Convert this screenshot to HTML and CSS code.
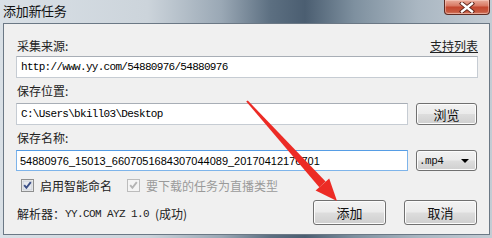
FILE: index.html
```html
<!DOCTYPE html>
<html lang="zh-CN">
<head>
<meta charset="utf-8">
<title>添加新任务</title>
<link rel="stylesheet" href="styles.css">
</head>
<body>
<div class="window">
  <div class="titlebar">
    <span class="title">添加新任务</span>
    <button class="close" aria-label="关闭">
      <svg width="16" height="11" viewBox="0 0 16 11">
        <path d="M3 1.5 L13 9.5 M13 1.5 L3 9.5" stroke="#5a2218" stroke-width="4.2" stroke-linecap="square"/>
        <path d="M3 1.5 L13 9.5 M13 1.5 L3 9.5" stroke="#ffffff" stroke-width="2.4" stroke-linecap="square"/>
      </svg>
    </button>
  </div>
  <div class="panel">
    <div class="label-row first">
      <span class="label">采集来源:</span>
      <span class="link">支持列表</span>
    </div>
    <div class="field mono">http://www.yy.com/54880976/54880976</div>
    <div class="label-row">
      <span class="label">保存位置:</span>
    </div>
    <div class="input-row">
      <div class="field short mono">C:\Users\bkill03\Desktop</div>
      <button class="btn side">浏览</button>
    </div>
    <div class="label-row">
      <span class="label">保存名称:</span>
    </div>
    <div class="input-row">
      <div class="field short focused sans">54880976_15013_6607051684307044089_20170412176701</div>
      <div class="combo"><span class="combo-text">.mp4</span><span class="caret"></span></div>
    </div>
    <div class="check-row">
      <label class="check">
        <svg class="box" width="13" height="13" viewBox="0 0 13 13">
          <rect x="0.5" y="0.5" width="12" height="12" fill="#f4f4f4" stroke="#8e8f8f"/>
          <rect x="2" y="2" width="9" height="9" fill="#e6e9ee" stroke="#b9c0c8" stroke-width="0.6"/>
          <path d="M3.2 6.2 L5.4 8.8 L9.8 3.2" fill="none" stroke="#3b4f87" stroke-width="1.9"/>
        </svg>
        <span>启用智能命名</span>
      </label>
      <label class="check disabled">
        <svg class="box" width="13" height="13" viewBox="0 0 13 13">
          <rect x="0.5" y="0.5" width="12" height="12" fill="#f4f4f4" stroke="#bcbcbc"/>
          <path d="M3.2 6.2 L5.4 8.8 L9.8 3.2" fill="none" stroke="#b4b4b4" stroke-width="1.9"/>
        </svg>
        <span>要下载的任务为直播类型</span>
      </label>
    </div>
    <div class="bottom-row">
      <span class="parser"><span class="cjk">解析器：</span><span class="mono">YY.COM AYZ 1.0 </span><span class="cjk">(成功)</span></span>
      <div class="actions">
        <button class="btn main">添加</button>
        <button class="btn main">取消</button>
      </div>
    </div>
  </div>
  <svg class="arrow" width="492" height="238" viewBox="0 0 492 238">
    <polygon points="246.2,101.6 247.8,100.4 325.6,181.5 319.3,187.3" fill="#ec2b25"/>
    <polygon points="337,201 315.6,190.6 329.2,178.4" fill="#ec2b25"/>
  </svg>
</div>
</body>
</html>
```
FILE: styles.css
```css
* { box-sizing: border-box; }
html, body { margin: 0; padding: 0; }
body {
  width: 492px;
  height: 238px;
  overflow: hidden;
  background: #f0f0f0;
  font-family: "Noto Sans CJK SC", "Liberation Sans", sans-serif;
}
.window {
  position: relative;
  width: 492px;
  height: 238px;
  background: linear-gradient(90deg, #d9e0e6 0%, #ccd4db 30%, #9aa8b5 45%, #5c6f81 55%, #4b5e71 62%, #7e909f 72%, #aab7c2 85%, #c3ccd4 100%);
  display: flex;
  flex-direction: column;
}
.titlebar {
  height: 23px;
  display: flex;
  justify-content: space-between;
  align-items: flex-start;
  padding-left: 3px;
  padding-right: 2px;
}
.title {
  font-size: 13px;
  line-height: 22px;
  color: #111;
  letter-spacing: -0.3px;
}
.close {
  width: 46px;
  height: 15px;
  padding: 0;
  margin: 0;
  border: 1px solid #5e2b22;
  border-top: none;
  border-radius: 0 0 4px 4px;
  background: linear-gradient(180deg, #e9ad9c 0%, #d97b66 40%, #c4472f 52%, #c75a40 85%, #d88a72 100%);
  display: flex;
  align-items: center;
  justify-content: center;
  box-shadow: inset 0 0 0 1px rgba(255,220,210,0.45);
}
.close svg { display: block; }
.panel {
  margin-left: 3px;
  width: 487px;
  height: 212px;
  background: #f0f0f0;
  border: 1px solid #6b7885;
  padding: 12px 11px 0 12px;
  display: flex;
  flex-direction: column;
}
.label-row {
  height: 25px;
  padding-top: 4px;
  display: flex;
  justify-content: space-between;
  align-items: flex-start;
}
.label-row.first { height: 20px; padding-top: 1px; }
.label, .link {
  font-size: 12px;
  line-height: 17px;
  color: #222;
  padding-left: 1px;
}
.link {
  text-decoration: underline;
  font-size: 12px;
  color: #222;
}
.field {
  height: 22px;
  width: 462px;
  background: #fff;
  border: 1px solid #c6ccd3;
  border-top-color: #a8aeb6;
  padding-left: 4px;
  color: #000;
  display: flex;
  align-items: center;
  white-space: nowrap;
  overflow: hidden;
}
.field.short { width: 392px; }
.field.focused {
  border-color: #7eb4ea;
  border-top-color: #569de5;
  height: 21px;
  padding-left: 3px;
}
.mono {
  font-family: "Liberation Mono", monospace;
  font-size: 11px;
  letter-spacing: -0.7px;
}
.sans {
  font-family: "Liberation Sans", sans-serif;
  font-size: 11px;
}
.input-row {
  height: 22px;
  display: flex;
  gap: 8px;
}
.btn {
  font-family: "Noto Sans CJK SC", sans-serif;
  font-size: 13px;
  color: #111;
  border: 1px solid #707070;
  border-radius: 3px;
  background: linear-gradient(180deg, #f2f2f2 0%, #ebebeb 48%, #dddddd 52%, #cfcfcf 100%);
  box-shadow: inset 0 0 0 1px #fcfcfc;
  padding: 0;
  margin: 0;
  display: flex;
  align-items: center;
  justify-content: center;
  line-height: 1;
}
.btn.side { width: 61px; height: 22px; }
.combo {
  width: 61px;
  height: 21px;
  border: 1px solid #707070;
  border-radius: 3px;
  background: linear-gradient(180deg, #f2f2f2 0%, #ebebeb 48%, #dddddd 52%, #cfcfcf 100%);
  box-shadow: inset 0 0 0 1px #fcfcfc;
  display: flex;
  align-items: center;
  justify-content: space-between;
  padding: 0 7px 0 2px;
}
.combo-text {
  font-family: "Liberation Mono", monospace;
  font-size: 11px;
  letter-spacing: -0.5px;
  color: #111;
}
.caret {
  width: 0;
  height: 0;
  border-left: 4px solid transparent;
  border-right: 4px solid transparent;
  border-top: 4px solid #000;
}
.check-row {
  height: 26px;
  display: flex;
  align-items: center;
  gap: 15px;
  padding-left: 5px;
}
.check {
  display: flex;
  align-items: center;
  gap: 6px;
  font-size: 12px;
  color: #222;
  line-height: 17px;
}
.check .box { display: block; flex: none; }
.check.disabled { color: #9a9a9a; }
.bottom-row {
  height: 27px;
  padding-top: 2px;
  display: flex;
  justify-content: space-between;
  align-items: center;
}
.parser {
  font-size: 12px;
  color: #222;
  padding-left: 1px;
  padding-top: 2px;
  display: flex;
  align-items: center;
  white-space: pre;
}
.parser .mono { font-size: 11px; letter-spacing: -0.6px; }
.actions {
  display: flex;
  gap: 18px;
  margin-right: 1px;
  align-self: flex-end;
}
.btn.main { width: 73px; height: 25px; }
.arrow {
  position: absolute;
  left: 0;
  top: 0;
  pointer-events: none;
}
```
